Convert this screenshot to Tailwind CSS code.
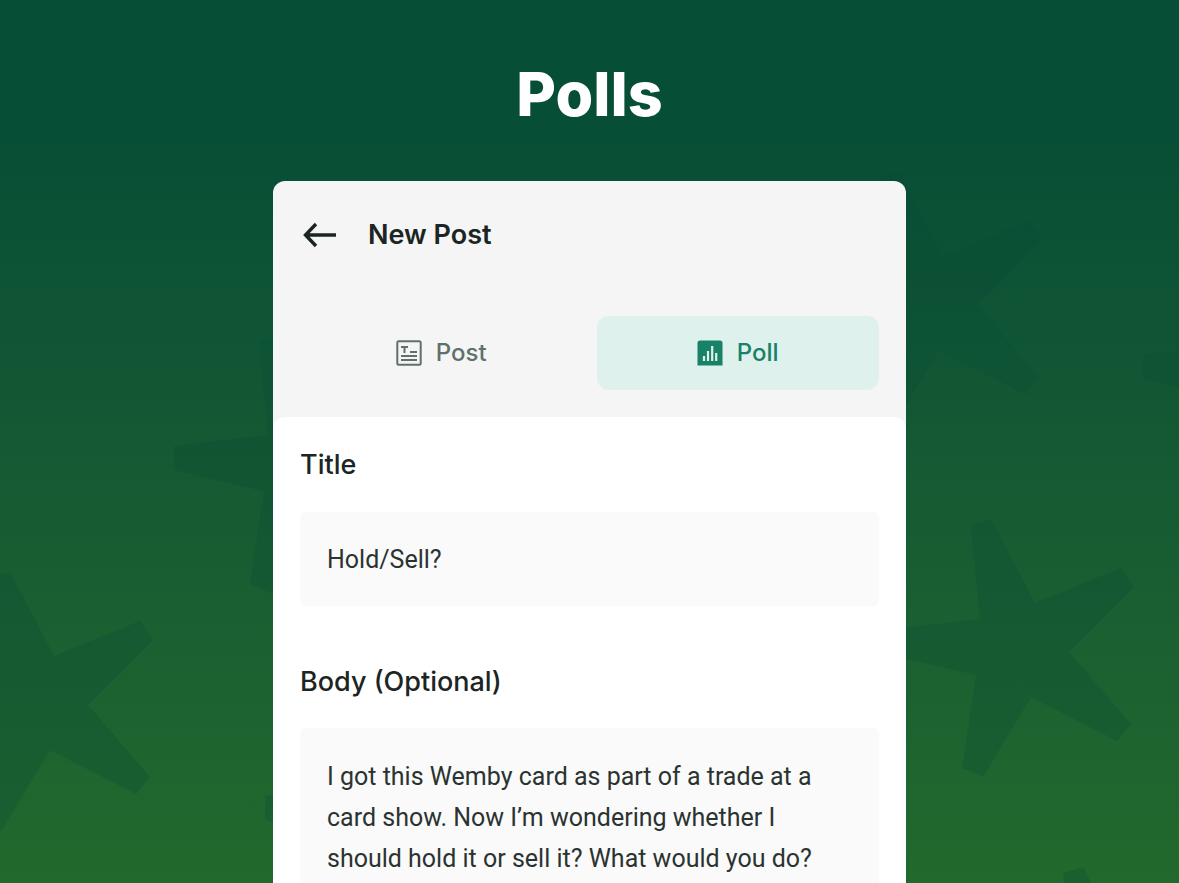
<!DOCTYPE html>
<html lang="en">
<head>
<meta charset="utf-8">
<meta name="viewport" content="width=device-width, initial-scale=1">
<title>Polls</title>
<script src="https://cdn.jsdelivr.net/npm/@tailwindcss/browser@4"></script>
</head>
<body class="font-[Inter,sans-serif] text-[#1b2523]">
<div class="relative h-screen overflow-hidden bg-linear-to-b from-[#074e36] from-15% to-[#22692d]">
  <svg class="absolute inset-0 h-full w-full" viewBox="0 0 1179 883" preserveAspectRatio="xMidYMid slice" fill="#064c36" fill-opacity=".28" aria-hidden="true">
    <defs>
      <path id="star" d="M971 525L991 519L1035 603L1121 568L1134 587L1069 652L1131 724L1117 741L1031 697L983 777L962 768L976 675L886 654V630L980 619Z"/>
    </defs>
    <use href="#star"/>
    <use href="#star" x="-92" y="-347"/>
    <use href="#star" x="-981" y="53"/>
    <use href="#star" x="-712" y="-184"/>
    <use href="#star" x="92" y="348"/>
    <use href="#star" x="257" y="-275"/>
    <use href="#star" x="-621" y="166"/>
  </svg>
  <main class="relative flex h-full flex-col items-center pt-16">
    <h1 class="text-[61px] leading-[60px] font-extrabold text-white">Polls</h1>
    <section class="mt-[57px] flex w-full max-w-[633px] grow flex-col rounded-t-xl bg-[#f5f5f5]">
      <header class="flex items-center gap-8 px-[30px] pt-9">
        <button type="button" aria-label="Back" class="shrink-0">
          <svg class="h-9 w-[33px]" viewBox="0 0 33 36" fill="none" stroke="#1b2523" stroke-width="3.4"><path d="M33 18H3M13 7L2.500 18L13 29"/></svg>
        </button>
        <h2 class="text-[27px] leading-9 font-semibold">New Post</h2>
      </header>
      <nav class="mt-[63px] grid grid-cols-2 gap-[14px] px-[27px] text-2xl font-medium">
        <button type="button" class="flex h-[74px] items-center justify-center gap-[14px] rounded-xl text-[#5f716a]">
          <svg class="h-[26px] w-[26px]" viewBox="0 0 26 26" fill="none" stroke="currentColor" stroke-width="2"><rect x="1.300" y="1.300" width="23.400" height="23.400" rx="1.500"/><path d="M5 7H12M8.500 7V13M14 12H21M5 16H21M5 20H21"/></svg>
          Post
        </button>
        <button type="button" class="flex h-[74px] items-center justify-center gap-[14px] rounded-xl bg-[#dff1ec] text-[#178268]">
          <svg class="h-[26px] w-[26px]" viewBox="0 0 26 26"><path fill="currentColor" d="M3 .5H23Q25.500 .5 25.500 3V25.500H.5V3Q.5 .5 3 .5Z"/><path d="M7 21V16M11 21V11M15.200 21V6M19.200 21V13" stroke="#dff1ec" stroke-width="2.200"/></svg>
          Poll
        </button>
      </nav>
      <form class="mt-[27px] flex grow flex-col rounded-t-xl bg-white px-[27px] pt-[30px]">
        <label for="title" class="text-[27px] leading-9 font-medium">Title</label>
        <input id="title" type="text" value="Hold/Sell?" class="mt-[29px] h-[94px] w-full shrink-0 rounded-md bg-[#fafafa] px-[27px] font-[Roboto,sans-serif] text-[25px] text-[#2b3331] outline-none">
        <label for="body" class="mt-[58px] text-[27px] leading-9 font-medium">Body (Optional)</label>
        <textarea id="body" rows="6" class="mt-[28px] w-full shrink-0 resize-none rounded-md bg-[#fafafa] px-[27px] py-7 font-[Roboto,sans-serif] text-[25px] leading-[41px] text-[#2b3331] outline-none">I got this Wemby card as part of a trade at a card show. Now I’m wondering whether I should hold it or sell it? What would you do?</textarea>
      </form>
    </section>
  </main>
</div>
</body>
</html>
